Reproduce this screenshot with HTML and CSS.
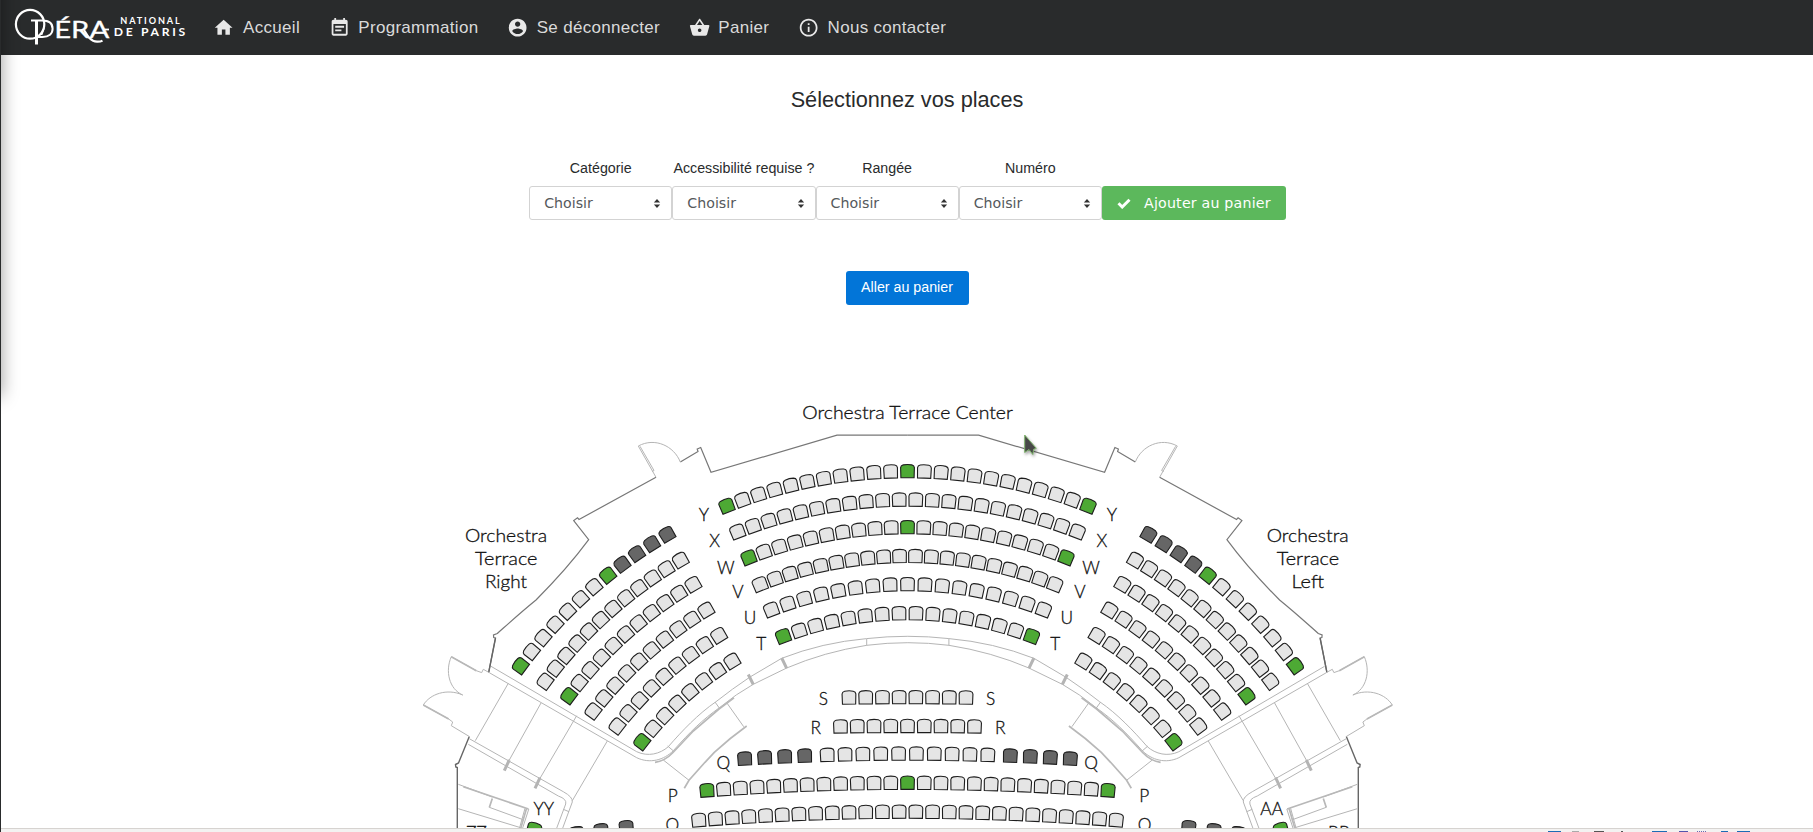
FILE: index.html
```html
<!DOCTYPE html>
<html lang="fr">
<head>
<meta charset="utf-8">
<title>Opéra national de Paris - Sélectionnez vos places</title>
<link rel="stylesheet" href="styles.css">
</head>
<body>
<div class="page">
<div class="drawer"></div>
<header class="navbar">
  <svg class="logo" width="180" height="55" viewBox="10 0 180 55">
    <g class="logo-lines">
      <ellipse cx="30.1" cy="24.3" rx="14.2" ry="14.4" stroke-width="2.2"/>
      <path d="M36.5 20.6V44.5" stroke-width="3"/>
      <path d="M31 20.6H42C49.5 20.6 52.6 24 52.6 28.7C52.6 33.6 49 36.9 42.5 36.9H36.8" stroke-width="2"/>
      <path d="M44 28L41.5 35" stroke-width="1.6"/>
      <path d="M84 30C87 35 90 41.5 97 41.7C99.500 41.800 101 41.500 102.500 40.600" stroke-width="2.2"/>
      <path d="M103 29.500H109" stroke-width="1.8"/>
    </g>
    <g class="logo-text">
      <text class="logo-name" x="54.200" y="37.600" font-size="23.500" textLength="55" lengthAdjust="spacingAndGlyphs">ÉRA</text>
      <text x="120.300" y="23.700" font-size="9.100" font-weight="700" textLength="59.500">NATIONAL</text>
      <text x="113.700" y="36.400" font-size="12.200" font-weight="700" textLength="71.500">DE PARIS</text>
    </g>
  </svg>
  <nav class="nav">
    <a class="nav-link"><svg viewBox="0 0 24 24"><path d="M10 20v-6h4v6h5v-8h3L12 3 2 12h3v8z"/></svg><span>Accueil</span></a>
    <a class="nav-link"><svg viewBox="0 0 24 24"><path d="M17 10H7v2h10v-2zm2-7h-1V1h-2v2H8V1H6v2H5c-1.110 0-1.990.9-1.990 2L3 19c0 1.100.890 2 2 2h14c1.100 0 2-.9 2-2V5c0-1.100-.9-2-2-2zm0 16H5V8h14v11zm-5-5H7v2h7v-2z"/></svg><span>Programmation</span></a>
    <a class="nav-link"><svg viewBox="0 0 24 24"><path d="M12 2C6.480 2 2 6.480 2 12s4.480 10 10 10 10-4.480 10-10S17.520 2 12 2zm0 3c1.660 0 3 1.340 3 3s-1.340 3-3 3-3-1.340-3-3 1.340-3 3-3zm0 14.200c-2.500 0-4.710-1.280-6-3.220.03-1.990 4-3.080 6-3.080 1.990 0 5.970 1.090 6 3.080-1.290 1.940-3.500 3.220-6 3.220z"/></svg><span>Se déconnecter</span></a>
    <a class="nav-link"><svg viewBox="0 0 24 24"><path d="M17.210 9l-4.380-6.560c-.19-.28-.51-.42-.83-.42-.32 0-.64.140-.83.430L6.790 9H2c-.55 0-1 .45-1 1 0 .090.010.180.040.270l2.540 9.270c.23.840 1 1.460 1.920 1.460h13c.92 0 1.690-.62 1.930-1.460l2.540-9.270L23 10c0-.55-.45-1-1-1h-4.790zM9 9l3-4.400L15 9H9zm3 8c-1.100 0-2-.9-2-2s.9-2 2-2 2 .9 2 2-.9 2-2 2z"/></svg><span>Panier</span></a>
    <a class="nav-link"><svg viewBox="0 0 24 24"><path d="M11 17h2v-6h-2v6zm1-15C6.480 2 2 6.480 2 12s4.480 10 10 10 10-4.480 10-10S17.520 2 12 2zm0 18c-4.410 0-8-3.590-8-8s3.590-8 8-8 8 3.590 8 8-3.590 8-8 8zM11 9h2V7h-2v2z"/></svg><span>Nous contacter</span></a>
  </nav>
</header>

<main class="content">
  <h1 class="title">Sélectionnez vos places</h1>
  <form class="filters">
    <div class="field"><label>Catégorie</label><div class="select">Choisir<svg viewBox="0 0 8 10"><path d="M4 0L7.500 4H.5zM4 10L.5 6h7z"/></svg></div></div>
    <div class="field"><label>Accessibilité requise ?</label><div class="select">Choisir<svg viewBox="0 0 8 10"><path d="M4 0L7.500 4H.5zM4 10L.5 6h7z"/></svg></div></div>
    <div class="field"><label>Rangée</label><div class="select">Choisir<svg viewBox="0 0 8 10"><path d="M4 0L7.500 4H.5zM4 10L.5 6h7z"/></svg></div></div>
    <div class="field"><label>Numéro</label><div class="select">Choisir<svg viewBox="0 0 8 10"><path d="M4 0L7.500 4H.5zM4 10L.5 6h7z"/></svg></div></div>
    <button type="button" class="btn add"><svg viewBox="0 0 14 11"><path d="M1.500 5.300L5.200 9L12.500 1.700"/></svg><span>Ajouter au panier</span></button>
  </form>
  <button type="button" class="btn go">Aller au panier</button>

  <svg class="plan" width="1020" height="438" viewBox="397 390 1020 438">
    <defs>
      <path id="seat" d="M-6.600 6.600L-6.900-3.600Q-6.700-5.700-4.300-6.300Q0-7.200 4.300-6.300Q6.700-5.700 6.900-3.600L6.600 6.600Z"/>
      <g id="half">
        <g class="wall">
          <path d="M907.800 435.200H837L711 472.300L700.700 447.500L697.200 449L698 451.500L680.300 462"/>
          <path d="M656 477.300L579 519.500L577.500 517.700L573.700 520.500L588.700 539.700C570 565 548 588 536 600C520 613 508 624 497.300 633.500L493.500 635L493.700 637.500L495.500 638L488.700 672.300"/>
          <path class="thick" d="M495.500 638L488.700 672.300M469.300 736.500L458.500 763L455.500 764.500L455.800 767L457.300 767.500V830"/>
        </g>
        <g class="fine">
          <path d="M680.300 462C674 446 655 437 638.300 446L656 477.300M640 446.300L654 470.500L652 471.500"/>
          <path d="M488.700 672.300L483.300 669.300L481.700 672.600L476.300 670.700L451.300 656.700C445 671 449 689 462.700 695C447 688 430 694 423.300 705L448.700 719L452.700 722L451.300 725.700L469.300 736.500"/>
          <path d="M491 666.300L636.700 751.700C648 757 660 754 668.300 746.700C682 731 698 714 716 701.700Q732 689 750 677L781.700 658.300Q822 642.500 866.700 638.600Q887 636.300 907.800 636.300"/>
          <path d="M489.300 672.700L636.700 757.700C650 764 664 760 673.300 750.700C690 732 702 720 720 707.300Q736 694 753.300 684.300L786.700 668Q824 652 866.700 645.300Q887 642.700 907.800 642.700"/>
          <path d="M866.700 639V645.500M715 702L719.500 708.300M667.700 746L673.500 751"/>
          <path d="M508.300 683.300L475.300 740.700M541 703L509.300 760M576.700 715.700L540 778.300M607.300 741L572.300 800.700"/>
          <path d="M469.300 738.700L563.300 791.700Q573 797 572.300 802L562 830M468.300 744.300L558.300 796Q567 799 565.700 804L556 830M563.300 809.300L569 811.700"/>
          <path d="M663.300 760L689 780.300M726.700 702.700L743.700 726.700M458.300 784.300L492.300 797M489.300 807.300L524 820M458.300 808.700L521.700 828M525 808.300L519 830M528.800 809L522 830"/>
        </g>
        <g class="rail">
          <path d="M781.700 658L786.700 668.300M748.300 674.500L753.300 684.500M509.300 760L504.300 770.700M540 777.700L535 788.300"/>
        </g>
        <g class="bar">
          <path d="M655 762.300Q665 761 673 752.500L693.300 731L719 709L734 697.700M684.300 788.300L689 780.300L705 762.300L714.300 752.300Q730 738 746.700 726M463.300 786.700L528.500 809M492.300 798.500L489.300 807.500M451.300 656.700L476.300 670.700M423.300 705L448.700 719M526.500 808.500L520.500 829"/>
        </g>
      </g>
    </defs>
    <use href="#half"/>
    <use href="#half" transform="translate(1815.600 0) scale(-1 1)"/>
    <g id="seats" class="seats"></g>
    <g id="letters" class="letters"></g>
    <g class="zones">
      <text x="802.300" y="418.500" textLength="210.500" lengthAdjust="spacingAndGlyphs">Orchestra Terrace Center</text>
      <text x="465" y="542.300" textLength="82" lengthAdjust="spacingAndGlyphs">Orchestra</text>
      <text x="475" y="565.300" textLength="62.500" lengthAdjust="spacingAndGlyphs">Terrace</text>
      <text x="485" y="587.900" textLength="42" lengthAdjust="spacingAndGlyphs">Right</text>
      <text x="1266.700" y="542.300" textLength="82" lengthAdjust="spacingAndGlyphs">Orchestra</text>
      <text x="1276.700" y="565.300" textLength="62.500" lengthAdjust="spacingAndGlyphs">Terrace</text>
      <text x="1291.500" y="587.900" textLength="32.500" lengthAdjust="spacingAndGlyphs">Left</text>
    </g>
    <path class="pointer" d="M1024.700 435V452.500L1029 449.500L1032.800 454.500L1033.600 449.300L1036.300 448.300Z"/>
  </svg>
</main>
<footer class="strip">
  <svg width="1813" height="4" viewBox="0 828 1813 4">
    <g stroke-width="1">
      <path stroke="#1d6cb5" d="M1548 831.500h13M1652 831.500h15M1721 831.500h7M1737 831.500h13"/>
      <path stroke="#5355ad" d="M1679 831.500h9"/>
      <path stroke="#6a6ab0" stroke-dasharray="1 1" d="M1697 831.500h10"/>
      <path stroke="#aaa" d="M1572 831.500h7"/>
      <path stroke="#555" d="M1594 831.500h10M1621 831.500h2"/>
    </g>
  </svg>
</footer>
</div>
<script src="seats.js"></script>
</body>
</html>
```
FILE: styles.css
```css
* { box-sizing: border-box; }
body {
  margin: 0;
  background: #fff;
  color: #292b2c;
  font-family: "Liberation Sans", Arial, sans-serif;
  overflow: hidden;
}
.page {
  position: relative;
  display: flex;
  flex-direction: column;
  height: 832px;
  border-left: 1px solid #292b2c;
  overflow: hidden;
}
.drawer {
  position: absolute;
  left: -20px;
  top: -20px;
  width: 20px;
  height: 416px;
  box-shadow: 0 0 18px rgba(0, 0, 0, .4);
}
.navbar {
  display: flex;
  align-items: center;
  flex: none;
  height: 55px;
  padding-left: 9px;
  background: #292b2c;
}
.logo { flex: none; }
.logo-lines { fill: none; stroke: #fff; }
.logo-text { fill: #fff; font-family: Lato, sans-serif; }
.logo-name { stroke: #fff; stroke-width: .3; }
.nav { display: flex; gap: 28.500px; margin-left: 23.300px; }
.nav-link {
  display: flex;
  align-items: center;
  gap: 8.500px;
  color: #dadada;
  font-size: 17px;
  letter-spacing: .3px;
  line-height: 24px;
  white-space: nowrap;
}
.nav-link svg { width: 21.300px; height: 21.300px; fill: #e8e8e8; }
.content {
  display: flex;
  flex-direction: column;
  align-items: center;
  flex: none;
  height: 773px;
}
.title {
  margin: 31px 0 0;
  font-size: 21.700px;
  font-weight: 400;
  line-height: 28px;
}
.filters { display: flex; align-items: flex-end; margin: 44px 0 0 1px; }
.field { width: 143.200px; }
.field label {
  display: block;
  text-align: center;
  font-size: 14.250px;
  line-height: 20px;
  margin-bottom: 8px;
  white-space: nowrap;
}
.select {
  display: flex;
  align-items: center;
  justify-content: space-between;
  height: 34px;
  padding: 0 10px 0 14px;
  border: 1px solid #d3d3d3;
  border-radius: 3px;
  color: #55595c;
  font: 14.200px "DejaVu Sans", sans-serif;
}
.select svg { width: 8px; height: 9px; fill: #333; }
.btn {
  display: flex;
  align-items: center;
  justify-content: center;
  height: 34px;
  padding: 0 15px;
  border: 0;
  border-radius: 3px;
  color: #fff;
  white-space: nowrap;
}
.add {
  gap: 13px;
  width: 184px;
  background: #5cb85c;
  font: 14.200px "DejaVu Sans", sans-serif;
  letter-spacing: .2px;
}
.add svg { width: 14px; height: 11px; fill: none; stroke: #fff; stroke-width: 3; }
.go {
  width: 123px;
  margin-top: 51px;
  padding-bottom: 2px;
  background: #0275d8;
  font: 14.250px "Liberation Sans", Arial, sans-serif;
}
.plan { display: block; flex: none; margin-top: 85px; }
.wall, .fine, .rail, .bar { fill: none; }
.wall { stroke: #777; stroke-width: 1.200; }
.wall .thick { stroke: #666; stroke-width: 1.400; }
.fine { stroke: #b5b5b5; stroke-width: 1; }
.rail { stroke: #b4b4b4; stroke-width: 3; }
.bar { stroke: #b8b8b8; stroke-width: 1.700; }
.seats { stroke: #1d1d1d; stroke-width: 1.100; }
.free { fill: #e5e5e5; }
.taken { fill: #666; }
.access { fill: #4da934; }
.zones, .letters {
  fill: #111;
  stroke: #111;
  stroke-width: .3;
  font-family: Lato, sans-serif;
  font-size: 17.300px;
  font-weight: 300;
}
.letters { text-anchor: middle; }
.pointer { fill: #484848; stroke: #7fb56c; stroke-width: 1; filter: drop-shadow(1px 2px 1.500px rgba(0, 0, 0, .35)); }
.strip { height: 4px; flex: none; border-top: 1px solid #d6d3d0; background: #f3f2f1; overflow: hidden; }
.strip svg { display: block; margin: -1px 0 0 -1px; }
```
FILE: seats.js
```js
const NS = "http://www.w3.org/2000/svg";
const seatLayer = document.getElementById("seats");
const letterLayer = document.getElementById("letters");
const AXIS = 907.5;
const WEDGE_AXIS = 907.9;
const KINDS = { g: "access", d: "taken", ".": "free" };

function seat(x, y, angle, kind) {
  const el = document.createElementNS(NS, "use");
  el.setAttribute("href", "#seat");
  el.setAttribute("class", KINDS[kind]);
  el.setAttribute("transform", `translate(${x.toFixed(2)} ${y.toFixed(2)}) rotate(${angle.toFixed(2)})`);
  seatLayer.appendChild(el);
}

// Central rows: [seat kinds, half width, y at the axis, radius]
const centre = [
  ["g..........g..........g", 180.8, 471.2, 491],
  ["......................", 170, 499.6, 468],
  ["g.........g.........g", 158.8, 527.2, 433],
  ["....................", 147.5, 556, 400],
  [".................", 136.2, 584.2, 379],
  ["g..............g", 124.3, 613.2, 349],
  ["........", 58.5, 697.2, 5000],
  [".........", 67, 726, 5000],
  ["..........", 80.3, 753.6, 2600],
  ["g...........g...........g", 200.5, 782.8, 2680],
  ["..........................", 208.7, 811.7, 2600]
];
for (const [kinds, half, y, r] of centre) {
  const span = Math.asin(half / r);
  [...kinds].forEach((k, i) => {
    const a = -span + (2 * span * i) / (kinds.length - 1);
    seat(AXIS + r * Math.sin(a), y + r * (1 - Math.cos(a)), a * 180 / Math.PI, k);
  });
}

// Wedge rows: [seat kinds, top point, point on the arc, bottom point], mirrored on the right
const wedge = [
  ["ddddg......g", [667, 534.3], [593.7, 586.7], [520.3, 665.7]],
  ["............", [680.3, 560], [612.3, 608.8], [545, 681.3]],
  ["..........g", [693, 584.3], [625, 634.3], [568.7, 695.7]],
  ["..........", [706, 610], [651, 650], [593, 711]],
  [".........", [718.7, 635.3], [664, 676], [617, 726]],
  [".......g", [732, 661], [690, 691.5], [641.7, 741.7]]
];
function circle([ax, ay], [bx, by], [cx, cy]) {
  const d = 2 * (ax * (by - cy) + bx * (cy - ay) + cx * (ay - by));
  const a = ax * ax + ay * ay, b = bx * bx + by * by, c = cx * cx + cy * cy;
  return [(a * (by - cy) + b * (cy - ay) + c * (ay - by)) / d,
          (a * (cx - bx) + b * (ax - cx) + c * (bx - ax)) / d];
}
for (const [kinds, p, m, q] of wedge) {
  const [ox, oy] = circle(p, m, q);
  const r = Math.hypot(p[0] - ox, p[1] - oy);
  const a0 = Math.atan2(p[0] - ox, oy - p[1]);
  const a1 = Math.atan2(q[0] - ox, oy - q[1]);
  [...kinds].forEach((k, i) => {
    const a = a0 + (a1 - a0) * i / (kinds.length - 1);
    const x = ox + r * Math.sin(a), y = oy - r * Math.cos(a), deg = a * 180 / Math.PI;
    seat(x, y, deg, k);
    seat(2 * WEDGE_AXIS - x, y, -deg, k);
  });
}

// Single places on both sides: [kind, x, y, angle]
const singles = [
  ["d", 744.7, 758.6, -3], ["d", 764.7, 757.4, -3], ["d", 784.7, 756.4, -2], ["d", 804.7, 755.6, -2],
  ["d", 576.7, 833.500, -8], ["d", 601.2, 830.500, -7], ["d", 626.3, 827.400, -6],
  ["g", 534, 829.500, 17]
];
for (const [k, x, y, a] of singles) {
  seat(x, y, a, k);
  seat(2 * 907.5 - x, y, -a, k);
}

// Row letters: [text left, text right, x left, x right, baseline]
const rows = [
  ["Y", "Y", 704, 1112, 520.7], ["X", "X", 714.7, 1102, 546.7], ["W", "W", 725.7, 1091, 573.7],
  ["V", "V", 738, 1080, 598], ["U", "U", 750, 1066.7, 624.3], ["T", "T", 761.3, 1055.3, 650],
  ["S", "S", 823.3, 990.7, 705], ["R", "R", 815.7, 1000.3, 734.4], ["Q", "Q", 723.3, 1091, 768.5],
  ["P", "P", 672.7, 1144.3, 801.9], ["O", "O", 672.3, 1144.7, 831],
  ["YY", "AA", 543.8, 1271.7, 815], ["ZZ", "BB", 476.5, 1339, 838.5]
];
for (const [l, r, xl, xr, y] of rows) {
  for (const [t, x] of [[l, xl], [r, xr]]) {
    const el = document.createElementNS(NS, "text");
    el.setAttribute("x", x);
    el.setAttribute("y", y);
    el.textContent = t;
    letterLayer.appendChild(el);
  }
}
```
